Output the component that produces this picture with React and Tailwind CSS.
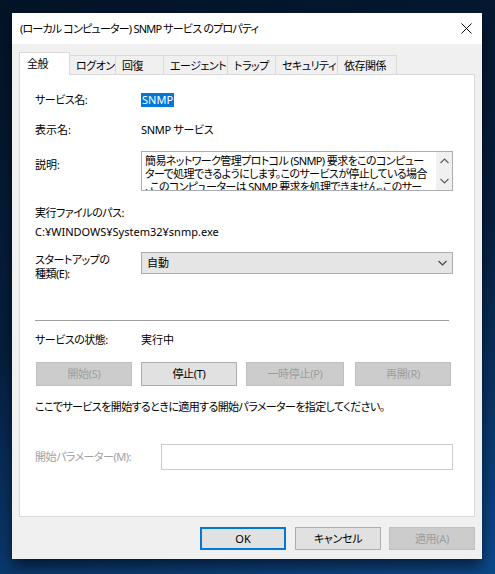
import { useState } from "react";

const tabs = [
  { label: "全般", w: "w-[51px]" },
  { label: "ログオン", w: "w-[46px]" },
  { label: "回復", w: "w-[48px]" },
  { label: "エージェント", w: "w-[64px]" },
  { label: "トラップ", w: "w-[48px]" },
  { label: "セキュリティ", w: "w-[62px]" },
  { label: "依存関係", w: "w-[59px]" }
];

function Chevron({ up = false, className = "" }) {
  return (
    <svg width="9" height="6" viewBox="0 0 9 6" className={className}>
      <polyline
        points={up ? "0.5,5 4.5,1 8.5,5" : "0.5,1 4.5,5 8.5,1"}
        fill="none"
        stroke="currentColor"
        strokeWidth="1.2"
      />
    </svg>
  );
}

function WinButton({ children, disabled = false, className = "" }) {
  return (
    <div
      className={`flex items-center justify-center border tracking-[-0.3px] ${
        disabled ? "border-[#bfbfbf] bg-[#cccccc] text-[#9d9d9d]" : "border-[#adadad] bg-[#e1e1e1] text-black"
      } ${className}`}
    >
      {children}
    </div>
  );
}

export default function App() {
  const [active] = useState(0);

  return (
    <div className="h-[574px] w-[495px] overflow-hidden bg-[linear-gradient(165deg,#031428_0%,#061f40_50%,#0c4a8c_100%)] pl-[12px] pt-[13px] font-['Noto_Sans','Noto_Sans_CJK_JP',sans-serif] text-[11px] leading-4 text-black [font-feature-settings:'palt']">
      <div className="flex h-[546px] w-[470px] flex-col bg-[#f0f0f0] shadow-[0_8px_14px_rgba(0,0,0,0.55)]">
        {/* title bar */}
        <div className="flex h-[31px] items-center justify-between bg-white pl-[8px] pr-[10px]">
          <span className="whitespace-nowrap tracking-[-0.8px]">(ローカル コンピューター) SNMP サービス のプロパティ</span>
          <svg width="11" height="11" viewBox="0 0 11 11">
            <path d="M0.5 0.5 L10.5 10.5 M10.5 0.5 L0.5 10.5" stroke="#111" strokeWidth="1" />
          </svg>
        </div>

        <div className="flex flex-col px-[7px] pt-[8px]">
          {/* tabs */}
          <div className="flex h-[22px] items-end whitespace-nowrap tracking-[-0.5px]">
            {tabs.map((tab, index) =>
              index === active ? (
                <div
                  key={tab.label}
                  className={`relative z-10 -mb-px flex h-[23px] shrink-0 items-center border border-b-0 border-[#d9d9d9] bg-white pl-[7px] ${tab.w}`}
                >
                  {tab.label}
                </div>
              ) : (
                <div
                  key={tab.label}
                  className={`flex h-[19px] shrink-0 items-center border-t border-r border-[#d9d9d9] pl-[6px] pt-px ${tab.w}`}
                >
                  {tab.label}
                </div>
              )
            )}
          </div>

          {/* panel */}
          <div className="flex h-[443px] flex-col border border-[#d9d9d9] bg-white pl-[15px] pr-[21px] pt-[17px]">
            <div className="flex h-[16px] items-center">
              <span className="w-[106px] shrink-0 tracking-[-0.5px]">サービス名:</span>
              <span className="bg-[#0078d7] px-px leading-[14px] text-white">SNMP</span>
            </div>

            <div className="mt-[14px] flex h-[16px] items-center">
              <span className="w-[106px] shrink-0">表示名:</span>
              <span className="tracking-[-0.3px]">SNMP サービス</span>
            </div>

            <div className="mt-[13px] flex h-[40px] items-start">
              <span className="mt-[6px] w-[106px] shrink-0">説明:</span>
              <div className="flex h-[40px] min-w-0 flex-1 border border-[#abadb3] bg-white">
                <div className="min-w-0 flex-1 overflow-hidden whitespace-nowrap pl-[3px] pt-[2px] leading-[13px] tracking-[-0.6px]">
                  <div>簡易ネットワーク管理プロトコル (SNMP) 要求をこのコンピュー</div>
                  <div>ターで処理できるようにします。このサービスが停止している場合</div>
                  <div>、このコンピューターは SNMP 要求を処理できません。このサー</div>
                </div>
                <div className="flex w-[16px] shrink-0 flex-col items-center justify-between bg-[#f0f0f0] py-[6px] text-[#606060]">
                  <Chevron up />
                  <Chevron />
                </div>
              </div>
            </div>

            <div className="mt-[14px] h-[16px] tracking-[-0.5px]">実行ファイルのパス:</div>
            <div className="mt-[3px] h-[16px]">C:¥WINDOWS¥System32¥snmp.exe</div>

            <div className="mt-[12px] flex items-start">
              <span className="mt-px w-[106px] shrink-0 leading-[14px] tracking-[-0.5px]">
                スタートアップの
                <br />
                種類(E):
              </span>
              <div className="flex h-[22px] flex-1 items-center justify-between border border-[#acacac] bg-[#e5e5e5] pl-[5px] pr-[5px]">
                <span>自動</span>
                <Chevron className="text-[#444]" />
              </div>
            </div>

            <div className="mr-[4px] mt-[39px] h-px bg-[#a0a0a0]" />

            <div className="mt-[11px] flex h-[16px] items-center">
              <span className="w-[106px] shrink-0 tracking-[-0.5px]">サービスの状態:</span>
              <span>実行中</span>
            </div>

            <div className="mt-[14px] flex h-[24px] pl-px">
              <WinButton disabled className="w-[96px]">開始(S)</WinButton>
              <WinButton className="ml-[9px] w-[96px]">停止(T)</WinButton>
              <WinButton disabled className="ml-[9px] w-[98px]">一時停止(P)</WinButton>
              <WinButton disabled className="ml-[11px] w-[96px]">再開(R)</WinButton>
            </div>

            <div className="mt-[13px] h-[16px] whitespace-nowrap tracking-[-0.6px]">
              ここでサービスを開始するときに適用する開始パラメーターを指定してください。
            </div>

            <div className="mt-[29px] flex h-[26px] items-center">
              <span className="w-[126px] shrink-0 tracking-[-0.5px] text-[#a0a0a0]">開始パラメーター(M):</span>
              <div className="h-[26px] flex-1 border border-[#cccccc] bg-white" />
            </div>
          </div>

          {/* dialog buttons */}
          <div className="mt-[10px] flex h-[23px] justify-end">
            <div className="flex w-[86px] items-center justify-center border-2 border-[#0078d7] bg-[#e1e1e1]">
              OK
            </div>
            <WinButton className="ml-[9px] w-[86px]">キャンセル</WinButton>
            <WinButton disabled className="ml-[8px] w-[86px]">適用(A)</WinButton>
          </div>
        </div>
      </div>
    </div>
  );
}
